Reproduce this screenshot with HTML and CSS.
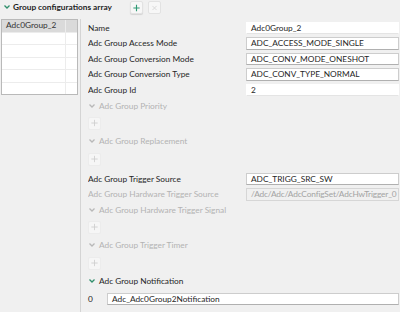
FILE: index.html
```html
<!DOCTYPE html>
<html lang="en">
<head>
  <meta charset="UTF-8" />
  <title>Group configurations array</title>
  <link rel="stylesheet" href="styles.css">
</head>
<body>
  <div class="header">
    <svg class="chev on" viewBox="0 0 6 4"><path d="M0.5 0.5 L3 3 L5.5 0.5" /></svg>
    <span class="title">Group configurations array</span>
    <button class="tool add">
      <svg viewBox="0 0 10 10"><path d="M5 0.5 V9.5 M0.5 5 H9.5" /></svg>
    </button>
    <button class="tool remove" disabled>
      <svg viewBox="0 0 10 10"><path d="M2 2 L8 8 M8 2 L2 8" /></svg>
    </button>
  </div>

  <div class="main">
    <div class="list">
      <div class="item selected"><span>Adc0Group_2</span><span></span></div>
      <div class="item"><span></span><span></span></div>
      <div class="item"><span></span><span></span></div>
      <div class="item"><span></span><span></span></div>
      <div class="item"><span></span><span></span></div>
      <div class="item"><span></span><span></span></div>
    </div>

    <div class="form">
      <div class="row">
        <span class="label">Name</span>
        <div class="field plain">Adc0Group_2</div>
      </div>
      <div class="row">
        <span class="label">Adc Group Access Mode</span>
        <div class="field">ADC_ACCESS_MODE_SINGLE</div>
      </div>
      <div class="row">
        <span class="label">Adc Group Conversion Mode</span>
        <div class="field">ADC_CONV_MODE_ONESHOT</div>
      </div>
      <div class="row">
        <span class="label">Adc Group Conversion Type</span>
        <div class="field">ADC_CONV_TYPE_NORMAL</div>
      </div>
      <div class="row">
        <span class="label">Adc Group Id</span>
        <div class="field plain">2</div>
      </div>

      <div class="group off first">
        <svg class="chev" viewBox="0 0 6 4"><path d="M0.5 0.5 L3 3 L5.5 0.5" /></svg>
        <span>Adc Group Priority</span>
      </div>
      <div class="add-row">
        <button class="tool small" disabled><svg viewBox="0 0 10 10"><path d="M5 0.5 V9.5 M0.5 5 H9.5" /></svg></button>
      </div>

      <div class="group off">
        <svg class="chev" viewBox="0 0 6 4"><path d="M0.5 0.5 L3 3 L5.5 0.5" /></svg>
        <span>Adc Group Replacement</span>
      </div>
      <div class="add-row">
        <button class="tool small" disabled><svg viewBox="0 0 10 10"><path d="M5 0.5 V9.5 M0.5 5 H9.5" /></svg></button>
      </div>

      <div class="row spaced">
        <span class="label">Adc Group Trigger Source</span>
        <div class="field">ADC_TRIGG_SRC_SW</div>
      </div>
      <div class="row">
        <span class="label muted">Adc Group Hardware Trigger Source</span>
        <div class="field disabled">/Adc/Adc/AdcConfigSet/AdcHwTrigger_0</div>
      </div>

      <div class="group off short">
        <svg class="chev" viewBox="0 0 6 4"><path d="M0.5 0.5 L3 3 L5.5 0.5" /></svg>
        <span>Adc Group Hardware Trigger Signal</span>
      </div>
      <div class="add-row">
        <button class="tool small" disabled><svg viewBox="0 0 10 10"><path d="M5 0.5 V9.5 M0.5 5 H9.5" /></svg></button>
      </div>

      <div class="group off">
        <svg class="chev" viewBox="0 0 6 4"><path d="M0.5 0.5 L3 3 L5.5 0.5" /></svg>
        <span>Adc Group Trigger Timer</span>
      </div>
      <div class="add-row">
        <button class="tool small" disabled><svg viewBox="0 0 10 10"><path d="M5 0.5 V9.5 M0.5 5 H9.5" /></svg></button>
      </div>

      <div class="group">
        <svg class="chev on" viewBox="0 0 6 4"><path d="M0.5 0.5 L3 3 L5.5 0.5" /></svg>
        <span>Adc Group Notification</span>
      </div>
      <div class="entry">
        <span class="index">0</span>
        <div class="field">Adc_Adc0Group2Notification</div>
      </div>
    </div>
  </div>
</body>
</html>
```

FILE: styles.css
```css
* {
  box-sizing: border-box;
}

body {
  margin: 0;
  width: 400px;
  height: 312px;
  overflow: hidden;
  background-color: #f0f0f0;
  color: #262626;
  font-family: 'Lato', 'Open Sans', sans-serif;
  font-size: 8.3px;
}

/* header */
.header {
  display: flex;
  align-items: center;
  height: 14px;
  padding-left: 4px;
}

.chev {
  width: 6px;
  height: 4px;
  flex: none;
}
.chev path {
  fill: none;
  stroke: #b8b8b8;
  stroke-width: 1.3;
}
.chev.on path {
  stroke: #2f8f6b;
}

.title {
  font-weight: bold;
  margin-left: 3px;
  width: 117px;
  color: #1e1e1e;
}

.tool {
  width: 13px;
  height: 13px;
  padding: 2px;
  background: #f7f7f7;
  border: 1px solid #e2e2e2;
  border-radius: 2px;
  display: flex;
  align-items: center;
  justify-content: center;
}
.tool svg {
  width: 8px;
  height: 8px;
}
.tool path {
  fill: none;
  stroke: #cfcfcf;
  stroke-width: 1.3;
}
.tool.add {
  margin-top: 1px;
  box-shadow: 0 1px 1px rgba(0,0,0,0.12);
}
.tool.add path {
  stroke: #2f9a74;
  stroke-width: 1.6;
}
.tool.remove {
  margin-left: 5px;
  margin-top: 1px;
}
.tool.remove path {
  stroke: #d6d6d6;
}

/* main area */
.main {
  display: flex;
  margin-top: 5px;
}

.list {
  margin-left: 1px;
  width: 77px;
  height: 76px;
  background: #fff;
  border: 1px solid #b9b9b9;
  overflow: hidden;
  flex: none;
}
.item {
  display: grid;
  grid-template-columns: 63px 1fr;
  height: 12.5px;
  border-bottom: 1px solid #ececec;
}
.item span {
  padding-left: 4px;
  line-height: 11px;
  color: #333;
}
.item span + span {
  border-left: 1px solid #ececec;
}
.item.selected {
  background: #dadada;
}

.form {
  margin-left: 2px;
  border-left: 1px solid #d4d4d4;
  height: 300px;
  padding-left: 7px;
  padding-top: 1px;
  flex: 1;
}

.row {
  display: flex;
  align-items: center;
  height: 15.5px;
}
.row.spaced {
  margin-top: 3px;
}
.label {
  width: 158px;
  flex: none;
  white-space: nowrap;
  overflow: hidden;
}
.label.muted {
  color: #b3b3b3;
}

.field {
  flex: 1;
  height: 12.5px;
  padding-left: 4px;
  line-height: 11px;
  background: #fff;
  border: 1px solid #cdcdcd;
  border-bottom-color: #b0b0b0;
  white-space: nowrap;
  overflow: hidden;
  margin-right: 1px;
}
.field.plain {
  border-color: #fff;
  border-bottom-color: #e4e4e4;
}
.field.disabled {
  background: #f0f0f0;
  color: #a3a3a3;
  border-color: #d6d6d6;
  letter-spacing: -0.15px;
}

.group {
  display: flex;
  align-items: center;
  height: 18px;
  padding-left: 1px;
}
.group span {
  margin-left: 4px;
}
.group.first {
  height: 16.5px;
}
.group.short {
  height: 16px;
}
.group.off {
  color: #b3b3b3;
}

.add-row {
  display: flex;
  align-items: center;
  height: 18px;
}
.tool.small {
  width: 13px;
  height: 13px;
  border-color: #ececec;
  background: #f6f6f6;
}

.entry {
  display: flex;
  align-items: center;
  height: 18px;
}
.index {
  width: 19px;
  flex: none;
}
```
